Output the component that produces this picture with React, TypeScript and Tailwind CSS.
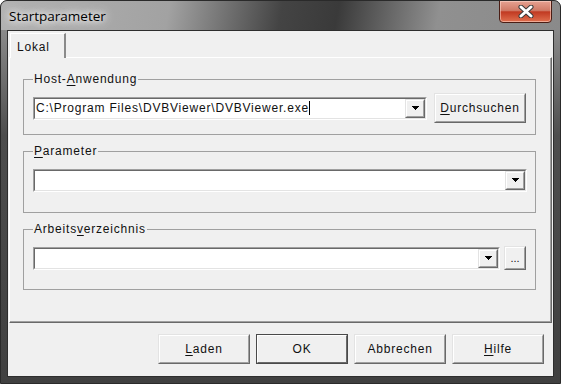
import React from "react";

const body = "font-['Liberation_Sans',Arial,sans-serif] text-[12px] tracking-[0.8px] text-[#111]";

function U({ children }: { children: React.ReactNode }) {
  return <span className="underline decoration-1 underline-offset-[2px]">{children}</span>;
}

function Raised({ className = "", children, dark = false }: { className?: string; children?: React.ReactNode; dark?: boolean }) {
  return (
    <div
      className={`border ${
        dark
          ? "border-[#4a4a4a]"
          : "border-t-[#e3e3e3] border-l-[#e3e3e3] border-b-[#696969] border-r-[#696969]"
      } ${className}`}
    >
      <div className={`h-full w-full border ${dark ? "border-t-white border-l-white border-b-[#696969] border-r-[#696969]" : "border-t-white border-l-white border-b-[#a0a0a0] border-r-[#a0a0a0]"} bg-[#f0f0f0] flex items-center justify-center`}>
        {children}
      </div>
    </div>
  );
}

function Arrow() {
  return (
    <svg width="7" height="4" viewBox="0 0 7 4" shapeRendering="crispEdges">
      <rect x="0" y="0" width="7" height="1" fill="#000" />
      <rect x="1" y="1" width="5" height="1" fill="#000" />
      <rect x="2" y="2" width="3" height="1" fill="#000" />
      <rect x="3" y="3" width="1" height="1" fill="#000" />
    </svg>
  );
}

function Combo({ className = "", children }: { className?: string; children?: React.ReactNode }) {
  return (
    <div className={`h-[23px] border border-t-[#a0a0a0] border-l-[#a0a0a0] border-b-white border-r-white ${className}`}>
      <div className="h-full w-full border border-t-[#696969] border-l-[#696969] border-b-[#e3e3e3] border-r-[#e3e3e3] bg-white flex">
        <div className="flex-1 flex items-center pl-[1px] overflow-hidden whitespace-nowrap">{children}</div>
        <Raised className="w-[20px] h-full">
          <Arrow />
        </Raised>
      </div>
    </div>
  );
}

function Group({ label, h, children }: { label: React.ReactNode; h: string; children: React.ReactNode }) {
  return (
    <fieldset className={`w-[513px] ${h} border border-[#a0a0a0] px-[9px]`}>
      <legend className="px-[1px] leading-[14px]">{label}</legend>
      <div className="pt-[7px]">
        <div className="h-[30px] flex items-center">{children}</div>
      </div>
    </fieldset>
  );
}

export default function App() {
  return (
    <div className="w-[561px] h-[384px] bg-white">
      <div className="w-[561px] h-[384px] flex flex-col rounded-t-[7px] border border-[#2a2a2a] overflow-hidden bg-[#474747] shadow-[inset_0_-2px_0_#3a3a3a,inset_0_-3px_0_#5cc4e0]">
        {/* title bar */}
        <div className="h-[29px] flex items-start justify-between bg-[linear-gradient(100deg,#b2b2b2_0%,#a2a2a2_30%,#444444_50%,#3a3a3a_60%,#909090_78%,#8a8a8a_100%)]">
          <div className="pl-[8px] pt-[6px] font-['Open_Sans',sans-serif] text-[13.5px] leading-[18px] text-black [text-shadow:0_0_6px_#fff,0_0_10px_#fff,0_0_16px_rgba(255,255,255,0.9)]">
            Startparameter
          </div>
          <div className="mr-[8px] mt-[-1px] w-[53px] h-[23px] rounded-b-[4px] border border-[#4a1d14] bg-[linear-gradient(180deg,#e6a292_0%,#d07a66_45%,#c13a22_52%,#e0704f_100%)] shadow-[inset_0_0_0_1px_rgba(255,220,210,0.55)] flex items-center justify-center">
            <svg width="16" height="13" viewBox="0 0 16 13">
              <path d="M3 2 L13 11 M13 2 L3 11" stroke="#3a3a3a" strokeWidth="5" strokeLinecap="round" />
              <path d="M3 2 L13 11 M13 2 L3 11" stroke="#fff" strokeWidth="3" strokeLinecap="round" />
            </svg>
          </div>
        </div>

        {/* body */}
        <div className="flex-1 flex flex-col px-[6px] pb-[6px] bg-[linear-gradient(180deg,#8a8a8a_0%,#4e4e4e_30%,#404040_100%)]">
          <div className={`flex-1 flex flex-col border border-[#2e2e2e] bg-[#f0f0f0] ${body}`}>
            {/* tab strip */}
            <div className="pt-[2px] pl-[2px] flex relative z-10">
              <div className="w-[56px] h-[25px] bg-[#f0f0f0] border-l border-t border-white border-r-2 border-r-[#8a8a8a] flex items-center pl-[6px] pt-[1px] -mb-[1px]">
                Lokal
              </div>
            </div>
            {/* panel */}
            <div className="mx-[1px] h-[266px] border border-t-white border-l-white border-r-[#696969] border-b-[#696969] shadow-[inset_-1px_-1px_0_#a0a0a0]">
              <div className="pl-[13px] pt-[14px] flex flex-col gap-[9px]">
                <Group
                  h="h-[63px]"
                  label={<>Host-<U>A</U>nwendung</>}
                >
                  <Combo className="flex-1">
                    <span>C:\Program Files\DVBViewer\DVBViewer.exe</span>
                    <span className="inline-block w-[1px] h-[14px] bg-black" />
                  </Combo>
                  <Raised className="ml-[7px] w-[92px] h-[30px]">
                    <span><U>D</U>urchsuchen</span>
                  </Raised>
                </Group>
                <Group h="h-[69px]" label={<><U>P</U>arameter</>}>
                  <Combo className="flex-1 mr-[-1px]" />
                </Group>
                <Group h="h-[68px]" label={<>Arbeits<U>v</U>erzeichnis</>}>
                  <Combo className="flex-1" />
                  <Raised className="ml-[4px] w-[22px] h-[24px]">
                    <span className="tracking-normal text-[11px]">...</span>
                  </Raised>
                </Group>
              </div>
            </div>
            {/* footer */}
            <div className="pt-[11px] pr-[9px] flex justify-end gap-[6px]">
              <Raised className="w-[92px] h-[30px]">
                <span><U>L</U>aden</span>
              </Raised>
              <Raised dark className="w-[92px] h-[30px]">
                <span>OK</span>
              </Raised>
              <Raised className="w-[92px] h-[30px]">
                <span>Abbrechen</span>
              </Raised>
              <Raised className="w-[92px] h-[30px]">
                <span><U>H</U>ilfe</span>
              </Raised>
            </div>
          </div>
        </div>
      </div>
    </div>
  );
}
